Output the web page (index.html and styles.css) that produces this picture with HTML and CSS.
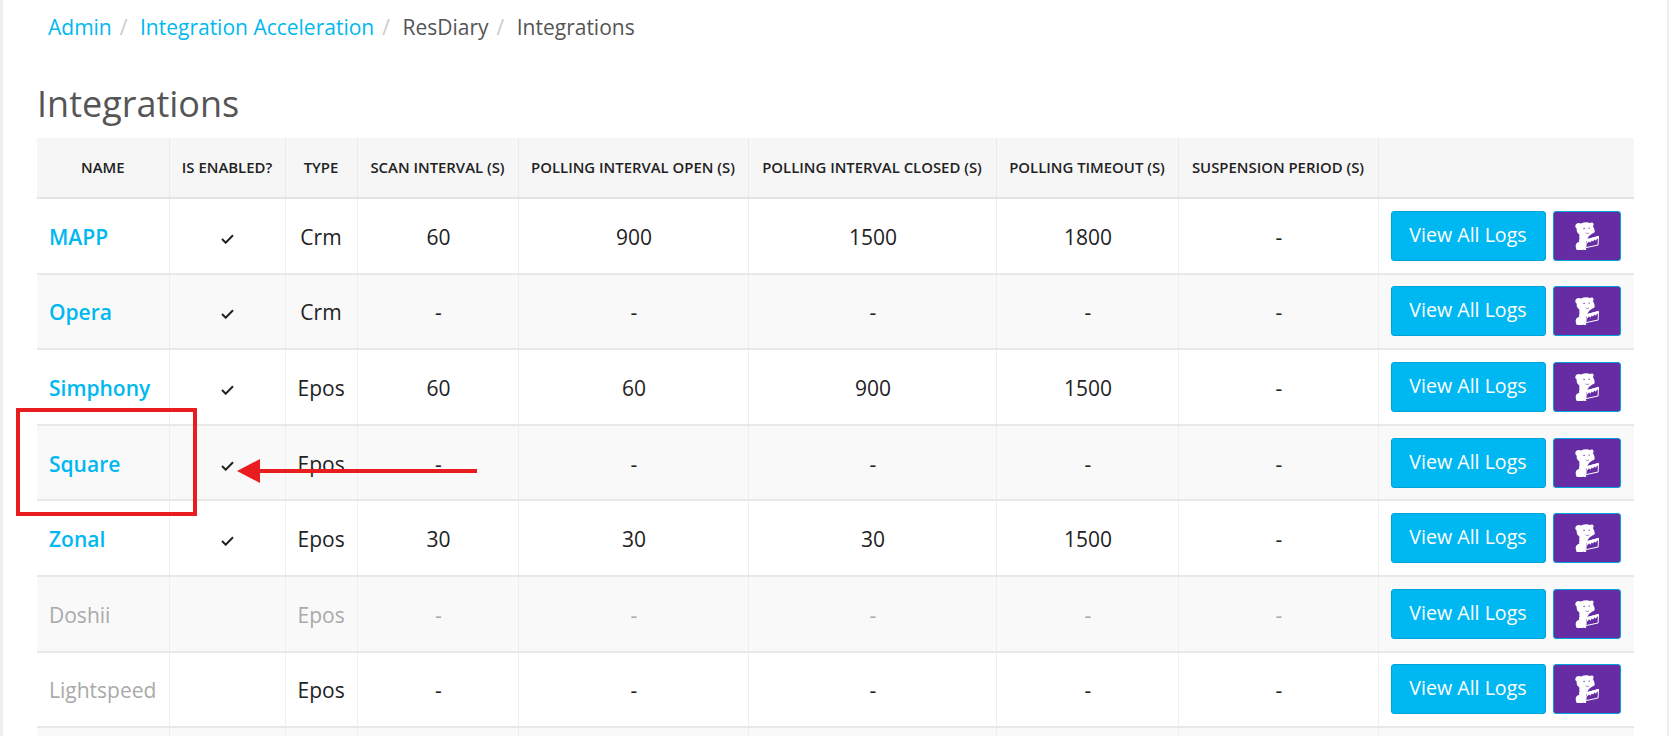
FILE: index.html
```html
<!DOCTYPE html>
<html lang="en">
<head>
<meta charset="utf-8">
<title>Integrations</title>
<link rel="stylesheet" href="styles.css">
</head>
<body>
<svg class="defs" width="0" height="0" aria-hidden="true">
  <symbol id="dog" viewBox="0 0 24 28">
    <path fill="#fff" d="M.3 4C.5 1.300 3.600.2 6 1.600 9 .1 12.500 0 15 1.100c1-.9 3-.9 3.500.6.400 1-.1 1.700-.6 2.200 1.100 1.900 1.800 3.900 1.800 5.600 0 1.100-1 1.800-2.400 2l-3.300 2.500-2 3.600-1.300.4 1 3.500-1 3.800.6 2.700-2 .3-.8-.9c-1.500 2-4.800 2.300-6.600.8C.3 25.700.2 22.400 2.100 20.700c.6-.5 1.200-.8 2.200-1-.4-1.300-.3-2.300.3-3.100-.5-1.300-.5-2.500 0-3.600-.6-.9-1.400-1.700-2.300-2.600C1.500 9 1.800 7.600 1.600 6.500 .9 5.700.2 5 .3 4z"/>
    <path fill="#662ca3" d="M8.900 5.700c.5-.2 1 .1 1 .6s-.4.800-.9.700c-.4 0-.6-.3-.6-.6 0-.3.200-.6.500-.7zM13.900 5.400c.5-.1.900.1.900.6 0 .4-.3.700-.7.700-.4 0-.7-.3-.7-.6 0-.4.200-.6.500-.7zM10.500 10.400c1.100.6 2.400.7 3.600.4l-.5.7c-1.100.2-2.200 0-3.100-.5z"/>
    <path fill="none" stroke="#fff" stroke-width="1" d="M10.500 18l13-3.600-.4 8.600-12 2.600z"/>
    <path fill="#fff" d="M10.500 17.500l13-3.600v3.200l-1.400-.6-1.200 2.200-1.400-1.200-1.500 2-1.200-1-1.500 2.200-1.300-1.400-1.500 2.100z"/>
  </symbol>
  <symbol id="tick" viewBox="0 0 13 10">
    <path fill="none" stroke="currentColor" stroke-width="2" d="M1 5l3.700 3.700L12 1.200"/>
  </symbol>
</svg>

<div class="page">
  <nav class="crumbs">
    <a class="crumb-link" href="#">Admin</a><span class="sep">/</span>
    <a class="crumb-link" href="#">Integration Acceleration</a><span class="sep">/</span>
    <span class="crumb">ResDiary</span><span class="sep">/</span>
    <span class="crumb">Integrations</span>
  </nav>
  <h1 class="title">Integrations</h1>

  <table class="grid">
    <colgroup>
      <col class="c1"><col class="c2"><col class="c3"><col class="c4"><col class="c5"><col class="c6"><col class="c7"><col class="c8"><col class="c9">
    </colgroup>
    <thead>
      <tr>
        <th>Name</th><th>Is Enabled?</th><th>Type</th><th>Scan Interval (s)</th><th>Polling Interval Open (s)</th><th>Polling Interval Closed (s)</th><th>Polling Timeout (s)</th><th>Suspension Period (s)</th><th></th>
      </tr>
    </thead>
    <tbody>
      <tr>
        <td class="name"><a href="#">MAPP</a></td><td><svg class="tick"><use href="#tick"/></svg></td><td>Crm</td><td>60</td><td>900</td><td>1500</td><td>1800</td><td>-</td>
        <td class="actions"><div class="btns"><a class="btn logs" href="#">View All Logs</a><a class="btn dd" href="#" aria-label="Datadog"><svg class="dog"><use href="#dog"/></svg></a></div></td>
      </tr>
      <tr>
        <td class="name"><a href="#">Opera</a></td><td><svg class="tick"><use href="#tick"/></svg></td><td>Crm</td><td>-</td><td>-</td><td>-</td><td>-</td><td>-</td>
        <td class="actions"><div class="btns"><a class="btn logs" href="#">View All Logs</a><a class="btn dd" href="#" aria-label="Datadog"><svg class="dog"><use href="#dog"/></svg></a></div></td>
      </tr>
      <tr>
        <td class="name"><a href="#">Simphony</a></td><td><svg class="tick"><use href="#tick"/></svg></td><td>Epos</td><td>60</td><td>60</td><td>900</td><td>1500</td><td>-</td>
        <td class="actions"><div class="btns"><a class="btn logs" href="#">View All Logs</a><a class="btn dd" href="#" aria-label="Datadog"><svg class="dog"><use href="#dog"/></svg></a></div></td>
      </tr>
      <tr>
        <td class="name"><a href="#">Square</a></td><td><svg class="tick"><use href="#tick"/></svg></td><td>Epos</td><td>-</td><td>-</td><td>-</td><td>-</td><td>-</td>
        <td class="actions"><div class="btns"><a class="btn logs" href="#">View All Logs</a><a class="btn dd" href="#" aria-label="Datadog"><svg class="dog"><use href="#dog"/></svg></a></div></td>
      </tr>
      <tr>
        <td class="name"><a href="#">Zonal</a></td><td><svg class="tick"><use href="#tick"/></svg></td><td>Epos</td><td>30</td><td>30</td><td>30</td><td>1500</td><td>-</td>
        <td class="actions"><div class="btns"><a class="btn logs" href="#">View All Logs</a><a class="btn dd" href="#" aria-label="Datadog"><svg class="dog"><use href="#dog"/></svg></a></div></td>
      </tr>
      <tr class="off">
        <td class="name">Doshii</td><td></td><td>Epos</td><td>-</td><td>-</td><td>-</td><td>-</td><td>-</td>
        <td class="actions"><div class="btns"><a class="btn logs" href="#">View All Logs</a><a class="btn dd" href="#" aria-label="Datadog"><svg class="dog"><use href="#dog"/></svg></a></div></td>
      </tr>
      <tr>
        <td class="name muted">Lightspeed</td><td></td><td>Epos</td><td>-</td><td>-</td><td>-</td><td>-</td><td>-</td>
        <td class="actions"><div class="btns"><a class="btn logs" href="#">View All Logs</a><a class="btn dd" href="#" aria-label="Datadog"><svg class="dog"><use href="#dog"/></svg></a></div></td>
      </tr>
      <tr>
        <td></td><td></td><td></td><td></td><td></td><td></td><td></td><td></td><td class="actions"></td>
      </tr>
    </tbody>
  </table>

  <div class="callout-box"></div>
  <svg class="callout-arrow" width="240" height="24" viewBox="0 0 240 24" aria-hidden="true">
    <path fill="#e91c20" d="M0 12L23 0v10h217v4H23v10z"/>
  </svg>
</div>
</body>
</html>
```

FILE: styles.css
```css
* { box-sizing: border-box; }

html, body {
  margin: 0;
  height: 736px;
  overflow: hidden;
  background: #eeeeee;
}

body {
  font-family: "Open Sans", "Liberation Sans", sans-serif;
  color: #333;
}

.defs { position: absolute; }

.page {
  position: relative;
  height: 736px;
  margin: 0 2px 0 3px;
  padding-left: 34px;
  background: #fff;
  overflow: hidden;
}

.crumbs {
  display: flex;
  align-items: center;
  height: 54px;
  padding-left: 11px;
  font-size: 21px;
  line-height: 28px;
}

.crumb-link { color: #00b8f1; text-decoration: none; }
.crumb { color: #555; }
.sep { margin: 0 12.500px 0 8px; color: #ccc; }

.title {
  margin: 25px 0 0;
  height: 59px;
  font-size: 36px;
  line-height: 50px;
  font-weight: 400;
  color: #555;
}

.grid {
  width: 1597px;
  table-layout: fixed;
  border-collapse: collapse;
  font-size: 21px;
  color: #222;
}

.c1 { width: 132px; }
.c2 { width: 116px; }
.c3 { width: 72px; }
.c4 { width: 161px; }
.c5 { width: 230px; }
.c6 { width: 248px; }
.c7 { width: 182px; }
.c8 { width: 200px; }
.c9 { width: 256px; }

th {
  height: 60px;
  padding: 0 2px 2px;
  background: #f6f6f7;
  border-left: 1px solid #eaeaee;
  border-bottom: 2px solid #e3e3e8;
  font-size: 14.900px;
  font-weight: 600;
  text-transform: uppercase;
  text-align: center;
  white-space: nowrap;
  color: #222;
}

th:first-child { border-left: 0; }

td {
  height: 75.600px;
  padding: 2px 12px 0;
  border-left: 1px solid #eeeeee;
  border-bottom: 2px solid #e8e8e8;
  text-align: center;
  white-space: nowrap;
}

td:nth-child(n+4) { padding-left: 14px; }

td:first-child { border-left: 0; }

tbody tr:nth-child(even) td { background: #f9f9f9; }

.name { text-align: left; font-weight: 600; }
.name a { color: #00b8f1; text-decoration: none; }

.off td { color: #aaa; }
.off .name, .muted { font-weight: 400; color: #aaa; }

.tick {
  display: block;
  width: 13px;
  height: 10px;
  margin: 4px auto 0;
  color: #222;
}

td.actions { padding: 0 12px; }

.btns { display: flex; gap: 7px; }

.btn {
  display: flex;
  align-items: center;
  justify-content: center;
  height: 50px;
  border-radius: 3px;
  text-decoration: none;
  color: #fff;
  font-size: 19.600px;
}

.logs {
  width: 155px;
  padding-bottom: 3px;
  background: #00b8f1;
  border: 1px solid #00a3d9;
}

.dd {
  width: 68px;
  background: #662ca3;
  border: 1px solid #00a3d9;
}

.dog { width: 24px; height: 28px; }

.callout-box {
  position: absolute;
  left: 13px;
  top: 408px;
  width: 181px;
  height: 108px;
  border: 4px solid #e91c20;
}

.callout-arrow {
  position: absolute;
  left: 234px;
  top: 459px;
}
```
